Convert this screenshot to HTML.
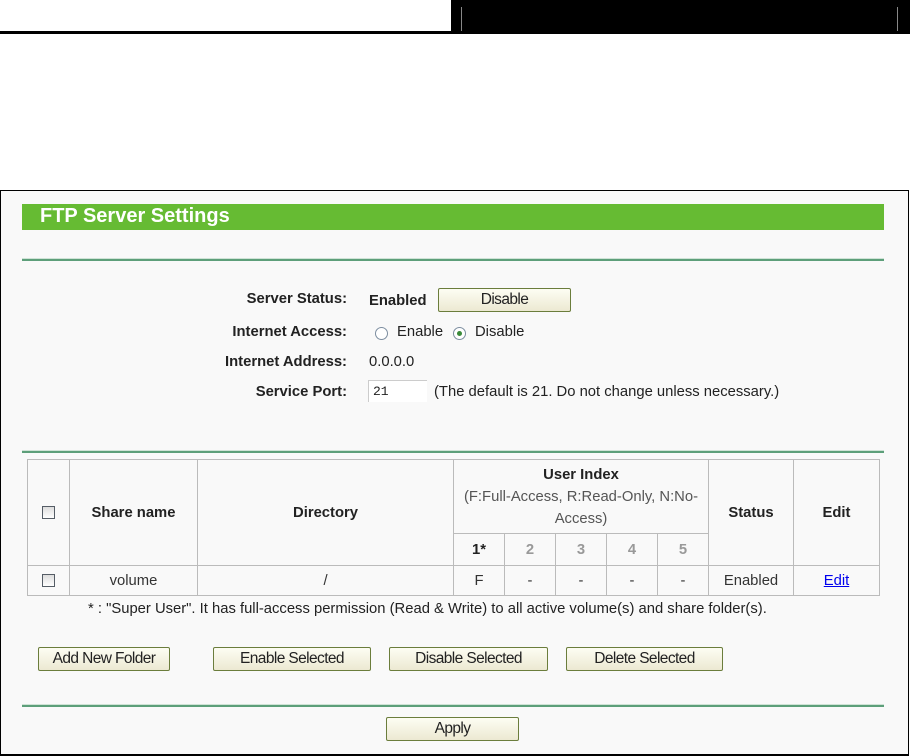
<!DOCTYPE html>
<html><head><style>
*{margin:0;padding:0;box-sizing:border-box}
body{width:910px;height:756px;position:relative;background:#fff;font-family:"Liberation Sans",Arial,sans-serif;font-size:14.8px;color:#222;overflow:hidden}
.a{position:absolute;white-space:nowrap}
.lbl{position:absolute;right:563px;font-weight:bold;white-space:nowrap}
.btn{position:absolute;height:24px;border:1px solid #6b7d3c;border-radius:2px;background:linear-gradient(#fdfdf3,#ece9d2);text-align:center;line-height:22px;font-size:15.5px;color:#222;letter-spacing:-0.6px}
.gl{position:absolute;left:22px;width:862px;height:3px;background:#5d9f7a;border-top:1px solid #cfe3d6}
table{position:absolute;left:27px;top:459px;border-collapse:collapse;font-size:14.8px}
td{border:1px solid #bbb;text-align:center;padding:0}
.cb{display:inline-block;width:13px;height:13px;border:1px solid #555d66;background:linear-gradient(#ddd,#fff);vertical-align:middle}
.g{color:#999;font-weight:bold}
.radio{position:absolute;width:13px;height:13px;border:1px solid #7d8ea0;border-radius:50%;background:#fff}
</style></head><body>
<div class="a" style="left:0;top:31px;width:910px;height:3px;background:#000"></div>
<div class="a" style="left:451px;top:0;width:459px;height:32px;background:#000"></div>
<div class="a" style="left:461px;top:7px;width:1px;height:24px;background:#888"></div>
<div class="a" style="left:897px;top:7px;width:1px;height:24px;background:#888"></div>

<div class="a" style="left:0;top:190px;width:909px;height:566px;border:1px solid #000;border-bottom:2px solid #000;background:#f9f9f9"></div>
<div class="a" style="left:22px;top:204px;width:862px;height:26px;background:#66bb33;color:#fff;font-weight:bold;font-size:20px;line-height:25px;padding-left:18px">FTP Server Settings</div>
<div class="gl" style="top:258px"></div>

<div class="lbl" style="top:291px">Server Status:</div>
<div class="a" style="left:369px;top:293px;font-weight:bold">Enabled</div>
<div class="btn" style="left:438px;top:288px;width:133px">Disable</div>
<div class="lbl" style="top:324px">Internet Access:</div>
<div class="radio" style="left:375px;top:327px"></div>
<div class="a" style="left:397px;top:324px">Enable</div>
<div class="radio" style="left:453px;top:327px"><div style="position:absolute;left:3px;top:3px;width:5px;height:5px;border-radius:50%;background:#3a8a3a"></div></div>
<div class="a" style="left:475px;top:324px">Disable</div>
<div class="lbl" style="top:354px">Internet Address:</div>
<div class="a" style="left:369px;top:354px">0.0.0.0</div>
<div class="lbl" style="top:384px">Service Port:</div>
<div class="a" style="left:368px;top:380px;width:59px;height:22px;background:#fff;border-top:1px solid #ccc;border-left:1px solid #ccc;font-family:'Liberation Mono',monospace;font-size:13px;padding:3px 4px">21</div>
<div class="a" style="left:434px;top:384px">(The default is 21. Do not change unless necessary.)</div>

<div class="gl" style="top:450px"></div>
<table>
<tr style="height:74px"><td rowspan="2" style="width:42px"><span class="cb"></span></td><td rowspan="2" style="width:128px"><b>Share name</b></td><td rowspan="2" style="width:256px"><b>Directory</b></td><td colspan="5" style="width:255px;line-height:22px;color:#555"><b style="color:#222">User Index</b><br>(F:Full-Access, R:Read-Only, N:No-<br>Access)</td><td rowspan="2" style="width:85px"><b>Status</b></td><td rowspan="2" style="width:86px"><b>Edit</b></td></tr>
<tr style="height:32px"><td style="width:51px"><b>1*</b></td><td style="width:51px" class="g">2</td><td style="width:51px" class="g">3</td><td style="width:51px" class="g">4</td><td style="width:51px" class="g">5</td></tr>
<tr style="height:30px;color:#333"><td><span class="cb"></span></td><td>volume</td><td>/</td><td>F</td><td>-</td><td>-</td><td>-</td><td>-</td><td>Enabled</td><td><span style="color:#00e;text-decoration:underline">Edit</span></td></tr>
</table>
<div class="a" style="left:88px;top:601px">* : "Super User". It has full-access permission (Read &amp; Write) to all active volume(s) and share folder(s).</div>

<div class="btn" style="left:38px;top:647px;width:132px">Add New Folder</div>
<div class="btn" style="left:213px;top:647px;width:158px">Enable Selected</div>
<div class="btn" style="left:389px;top:647px;width:159px">Disable Selected</div>
<div class="btn" style="left:566px;top:647px;width:157px">Delete Selected</div>
<div class="gl" style="top:704px"></div>
<div class="btn" style="left:386px;top:717px;width:133px">Apply</div>
</body></html>
